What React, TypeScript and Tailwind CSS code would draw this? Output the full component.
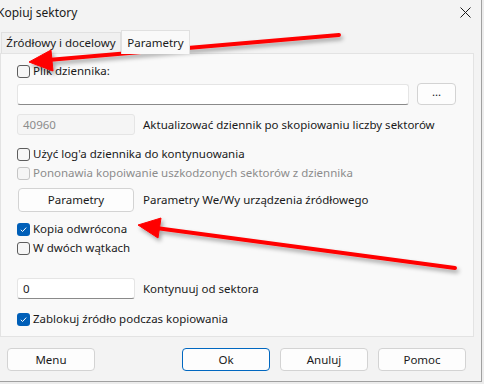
import React from "react";

function Check({ checked = false, disabled = false }: { checked?: boolean; disabled?: boolean }) {
  if (checked) {
    return (
      <span className="flex h-[13px] w-[13px] shrink-0 items-center justify-center rounded-[3px] bg-[#005fb8]">
        <svg width="9" height="9" viewBox="0 0 9 9">
          <path d="M1.8 4.8 L3.6 6.5 L7.2 2.6" fill="none" stroke="#fff" strokeWidth="1" />
        </svg>
      </span>
    );
  }
  return (
    <span
      className={
        disabled
          ? "h-[13px] w-[13px] shrink-0 rounded-[3px] border border-[#c5c5c5] bg-[#f5f5f5]"
          : "h-[13px] w-[13px] shrink-0 rounded-[3px] border border-[#5d5d5d] bg-[#f6f6f6]"
      }
    />
  );
}

function CheckRow({
  label,
  checked,
  disabled,
  className = "",
}: {
  label: string;
  checked?: boolean;
  disabled?: boolean;
  className?: string;
}) {
  return (
    <div className={"flex h-[16px] items-center gap-[3px] " + className}>
      <Check checked={checked} disabled={disabled} />
      <span className={disabled ? "text-[#8c8c8c]" : "text-[#1a1a1a]"}>{label}</span>
    </div>
  );
}

function Btn({ children, primary, className = "" }: { children: React.ReactNode; primary?: boolean; className?: string }) {
  return (
    <button
      className={
        "flex items-center justify-center rounded-[4px] bg-[#fdfdfd] text-[#1a1a1a] " +
        (primary ? "border border-[#0067c0] " : "border border-[#d3d3d3] ") +
        className
      }
    >
      {children}
    </button>
  );
}

function Arrows() {
  return (
    <svg className="pointer-events-none absolute left-0 top-0" width="484" height="384">
      <defs>
        <filter id="sh" x="-10%" y="-50%" width="120%" height="200%">
          <feDropShadow dx="2" dy="3" stdDeviation="2" floodColor="#000" floodOpacity="0.35" />
        </filter>
      </defs>
      <g filter="url(#sh)" fill="#ff0000" stroke="#ff0000">
        <line x1="339" y1="35" x2="48" y2="60" strokeWidth="4" strokeLinecap="round" />
        <polygon points="29,62 51,50 53,71" strokeWidth="1" strokeLinejoin="round" />
        <line x1="455" y1="268" x2="156" y2="228" strokeWidth="4" strokeLinecap="round" />
        <polygon points="138,225 161,218 158,238" strokeWidth="1" strokeLinejoin="round" />
      </g>
    </svg>
  );
}

export default function App() {
  return (
    <div className="h-[384px] w-[484px] overflow-hidden bg-[#ececec] font-['Noto_Sans','Liberation_Sans',sans-serif] text-[11.5px] leading-none text-[#1a1a1a]">
      <div className="relative flex h-[382px] w-[482px] flex-col border-b border-r border-[#a0a0a0] bg-[#f3f3f3]">
        {/* title bar */}
        <div className="flex h-[30px] shrink-0 items-center justify-between">
          <span className="-ml-[3px] -mt-[5px] text-[12px]">Kopiuj sektory</span>
          <svg className="mr-[10px] -mt-[6px]" width="11" height="11" viewBox="0 0 11 11">
            <path d="M0.5 0.5 L10.5 10.5 M10.5 0.5 L0.5 10.5" stroke="#1a1a1a" strokeWidth="1" />
          </svg>
        </div>

        {/* tabs */}
        <div className="flex h-[23px] shrink-0 items-end pl-[1px]">
          <div className="flex h-[21px] w-[120px] items-center justify-center border border-b-0 border-[#e0e0e0] bg-[#f0f0f0]">
            Źródłowy i docelowy
          </div>
          <div className="relative z-10 -mb-[1px] flex h-[24px] w-[69px] items-center justify-center border border-b-0 border-[#e0e0e0] bg-[#f9f9f9]">
            Parametry
          </div>
        </div>

        {/* panel */}
        <div className="flex h-[284px] w-[474px] shrink-0 flex-col border border-[#e3e3e3] bg-[#f9f9f9] pl-[16px]">
          <CheckRow label="Plik dziennika:" className="mt-[9px]" />
          <div className="mt-[4px] flex items-center">
            <div className="h-[21px] w-[392px] rounded-[3px] border border-[#e5e5e5] border-b-[#8a8a8a] bg-white" />
            <Btn className="ml-[8px] h-[22px] w-[39px] pb-[4px]">...</Btn>
          </div>
          <div className="mt-[9px] flex items-center gap-[8px]">
            <div className="flex h-[21px] w-[118px] items-center rounded-[3px] border border-[#e5e5e5] bg-[#f5f5f5] pl-[5px] text-[#8c8c8c]">
              40960
            </div>
            <span>Aktualizować dziennik po skopiowaniu liczby sektorów</span>
          </div>
          <CheckRow label="Użyć log'a dziennika do kontynuowania" className="mt-[11px]" />
          <CheckRow label="Pononawia kopoiwanie uszkodzonych sektorów z dziennika" disabled className="mt-[3px]" />
          <div className="mt-[7px] flex items-center gap-[9px]">
            <Btn className="ml-[1px] h-[24px] w-[116px]">Parametry</Btn>
            <span>Parametry We/Wy urządzenia źródłowego</span>
          </div>
          <CheckRow label="Kopia odwrócona" checked className="mt-[9px]" />
          <CheckRow label="W dwóch wątkach" className="mt-[3px]" />
          <div className="mt-[22px] flex items-center gap-[8px]">
            <div className="flex h-[21px] w-[118px] items-center rounded-[3px] border border-[#e5e5e5] border-b-[#8a8a8a] bg-white pl-[5px]">
              0
            </div>
            <span>Kontynuuj od sektora</span>
          </div>
          <CheckRow label="Zablokuj źródło podczas kopiowania" checked className="mt-[12px]" />
        </div>

        {/* footer */}
        <div className="flex flex-1 items-start pt-[11px]">
          <Btn className="ml-[7px] h-[23px] w-[88px]">Menu</Btn>
          <Btn primary className="ml-[87px] h-[23px] w-[88px]">Ok</Btn>
          <Btn className="ml-[10px] h-[23px] w-[88px]">Anuluj</Btn>
          <Btn className="ml-[10px] h-[23px] w-[88px]">Pomoc</Btn>
        </div>

        <Arrows />
      </div>
    </div>
  );
}
